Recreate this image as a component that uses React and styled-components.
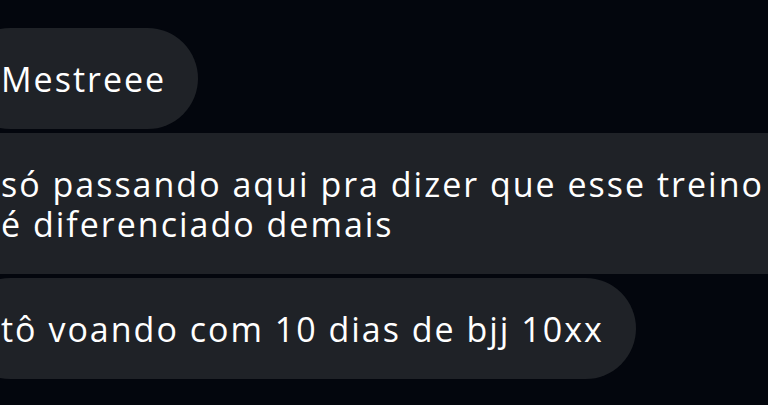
import React from 'react';
import styled, { createGlobalStyle } from 'styled-components';

const GlobalStyle = createGlobalStyle`
  html, body {
    margin: 0;
    background: #03060d;
    overflow: hidden;
  }
`;

const Screen = styled.div`
  width: 768px;
  height: 405px;
  background: #03060d;
  overflow: hidden;
`;

const Thread = styled.div`
  display: flex;
  flex-direction: column;
  align-items: flex-start;
  gap: 4px;
  padding-top: 28px;
  margin-left: -40px;
`;

const Bubble = styled.div`
  width: max-content;
  white-space: pre;
  background: #1f2227;
  color: #ffffff;
  font-family: "Open Sans", "DejaVu Sans", sans-serif;
  font-size: 34px;
  letter-spacing: 2px;
  line-height: 40px;
  padding: 31px 32px 30px 41px;
  border-radius: ${(p) => p.$radius || 51}px;
`;

const messages = [
  { text: 'Mestreee' },
  { text: 'só passando aqui pra dizer que esse treino\né diferenciado demais', radius: 30 },
  { text: 'tô voando com 10 dias de bjj 10xx' },
];

const App = () => {
  return (
    <>
      <GlobalStyle />
      <Screen>
        <Thread>
          {messages.map((m, i) => (
            <Bubble key={i} $radius={m.radius}>{m.text}</Bubble>
          ))}
        </Thread>
      </Screen>
    </>
  );
};

export default App;
